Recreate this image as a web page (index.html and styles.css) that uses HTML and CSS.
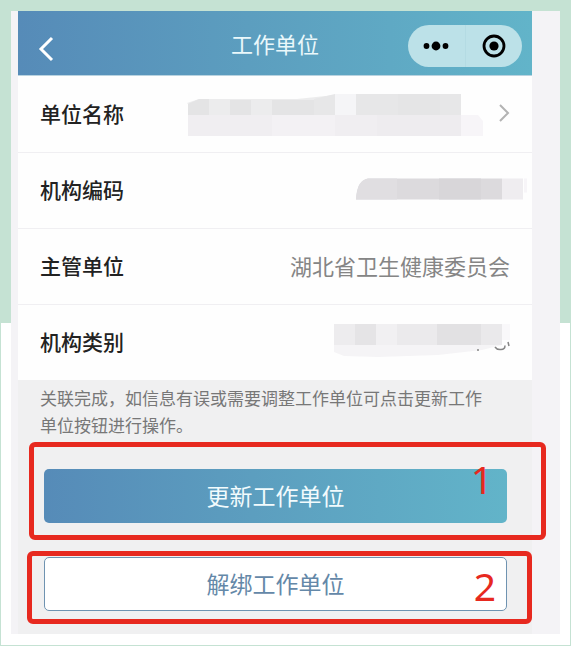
FILE: index.html
```
<!DOCTYPE html>
<html lang="zh-CN">
<head>
    <meta charset="UTF-8">
    <meta name="viewport" content="width=device-width, initial-scale=1.0">
    <title>工作单位</title>
    <link rel="stylesheet" href="styles.css">
</head>
<body>
    <div class="sheet">
        <main class="phone">
            <header class="navbar">
                <button class="back" aria-label="返回">
                    <svg width="16" height="26" viewBox="0 0 16 26"><path d="M14 2L3 13l11 11" fill="none" stroke="#fff" stroke-width="3"/></svg>
                </button>
                <h1>工作单位</h1>
                <div class="capsule">
                    <button aria-label="更多">
                        <svg width="26" height="10" viewBox="0 0 26 10"><circle cx="3.5" cy="5" r="2.9"/><circle cx="13" cy="5" r="4.4"/><circle cx="22.5" cy="5" r="2.9"/></svg>
                    </button>
                    <button aria-label="关闭">
                        <svg width="24" height="24" viewBox="0 0 24 24"><circle cx="12" cy="12" r="10" fill="none" stroke="#000" stroke-width="2.8"/><circle cx="12" cy="12" r="4.6"/></svg>
                    </button>
                </div>
            </header>

            <dl class="list">
                <div class="row">
                    <dt>单位名称</dt>
                    <dd>
                        <!-- 打码 -->
                        <svg width="297" height="46" viewBox="0 -4 297 46">
                            <path d="M0 9L12 5H110L148 1V21H1V10z" fill="#ececed"/>
                            <path d="M1 10L12 5H22V21H1zM43 6h21v15H43zM85 6h42v15H85z" fill="#e4e4e5"/>
                            <path d="M127 5l21-5v21h-21z" fill="#e7e7e8"/>
                            <path d="M148 0h21v21h-21z" fill="#f5f5f7"/>
                            <path d="M169 0h105v21H169z" fill="#e7e7e8"/>
                            <path d="M211 0h42v21h-42z" fill="#e5e5e6"/>
                            <path d="M1 21h273v21H1z" fill="#f0eef1"/>
                            <path d="M85 21h63v21H85z" fill="#f3f1f4"/>
                            <path d="M190 21h84v21h-84z" fill="#eeecef"/>
                            <path d="M274 21h17l5 6v15h-22z" fill="#f7f5f8"/>
                        </svg>
                        <svg class="arrow" width="12" height="20" viewBox="0 0 12 20"><path d="M2 2l8 8-8 8" fill="none" stroke="#b3b3b3" stroke-width="2"/></svg>
                    </dd>
                </div>
                <div class="row row-wide">
                    <dt>机构编码</dt>
                    <dd>
                        <svg width="171" height="22" viewBox="0 0 171 22">
                            <path d="M0 21.500Q1 2 12 .5H146v21z" fill="#dcdadd"/>
                            <path d="M0 21.500Q1 2 12 .5H41v21z" fill="#e0dee1"/>
                            <path d="M83 .5h42v21H83z" fill="#d8d6d9"/>
                            <path d="M146 .5h21v21h-21z" fill="#efedf0"/>
                            <path d="M168 .5h3v14h-3z" fill="#f7f5f8"/>
                        </svg>
                    </dd>
                </div>
                <div class="row">
                    <dt>主管单位</dt>
                    <dd>湖北省卫生健康委员会</dd>
                </div>
                <div class="row">
                    <dt>机构类别</dt>
                    <dd>
                        <svg width="176" height="34" viewBox="0 0 176 34">
                            <path d="M0 21h168l-20 5-44 5-60 2-34-1L0 28z" fill="#f5f4f6"/>
                            <path d="M0 0h168v21H0z" fill="#eae9eb"/>
                            <path d="M0 0h21v21H0z" fill="#edecee"/>
                            <path d="M21 0h21v21H21z" fill="#e5e4e6"/>
                            <path d="M42 0h21v21H42z" fill="#f1f0f2"/>
                            <path d="M63 0h40v21H63z" fill="#ebeaec"/>
                            <path d="M103 0h44v21h-44z" fill="#e2e1e3"/>
                            <path d="M168 0h8v16h-8z" fill="#f9f8fa"/>
                            <path d="M161 23q2 3 6 2.500q4 0 4-4M174 18l1 4M144 25v2" fill="none" stroke="#858585" stroke-width="1.500"/>
                        </svg>
                    </dd>
                </div>
            </dl>

            <p class="note">关联完成，如信息有误或需要调整工作单位可点击更新工作单位按钮进行操作。</p>

            <div class="mark mark-update">
                <button class="btn btn-primary">更新工作单位</button>
                <span class="num">1</span>
            </div>
            <div class="mark mark-unbind">
                <button class="btn btn-outline">解绑工作单位</button>
                <span class="num">2</span>
            </div>
        </main>
    </div>
</body>
</html>
```
FILE: styles.css
```
* {
    box-sizing: border-box;
}

body {
    margin: 0;
    min-height: 100vh;
    padding: 10px;
    border: 1px solid #c5e2d3;
    background: linear-gradient(#c5e2d3 50%, #fff 50%) no-repeat;
    font-family: "Liberation Sans", "Noto Sans CJK SC", sans-serif;
}

button {
    padding: 0;
    border: none;
    background: none;
    font-family: inherit;
    cursor: pointer;
}

svg {
    display: block;
}

.sheet {
    padding: 0 28px 0 7px;
    background-color: #f4f3f6;
}

.phone {
    padding-bottom: 10px;
    background-color: #f0f0f1;
}

/* 顶部导航 */
.navbar {
    display: grid;
    grid-template-columns: 1fr auto 1fr;
    align-items: center;
    height: 65px;
    padding: 6px 10px 0;
    border-bottom: 1px solid #b9d3e0;
    background: linear-gradient(to right, #568bb8, #5c9ebf 45%, #62b4c9);
}

.back {
    justify-self: start;
    padding: 6px 10px 0;
}

.navbar h1 {
    margin: 0;
    color: #eaf8fb;
    font-size: 22px;
    font-weight: normal;
    line-height: 32px;
}

.capsule {
    display: flex;
    justify-self: end;
    width: 114px;
    height: 42px;
    border-radius: 21px;
    background-color: #bce1e8;
}

.capsule button {
    display: flex;
    flex: 1;
    align-items: center;
    justify-content: center;
}

.capsule button + button {
    border-left: 1px solid #b4dbe3;
}

/* 信息列表 */
.list {
    margin: 0;
    background-color: #fefefe;
}

.row {
    display: flex;
    align-items: center;
    justify-content: space-between;
    height: 76px;
    padding: 0 22px 3px;
}

.row + .row {
    border-top: 1px solid #f0eff2;
}

.row-wide {
    padding-right: 5px;
}

dt {
    color: #222;
    font-size: 21px;
    font-weight: 500;
}

dd {
    display: flex;
    align-items: center;
    margin: 0;
    color: #858585;
    font-size: 22px;
}

.arrow {
    margin-left: 14px;
}

.note {
    margin: 0;
    padding: 6px 36px 2px 22px;
    color: #777;
    font-size: 17px;
    line-height: 27px;
}

/* 红框标注 */
.mark {
    position: relative;
    border: 5px solid #e7291f;
    border-radius: 6px;
}

.mark-update {
    margin: 0 -14px 11px 11px;
    padding: 22px 34px 12px 10px;
}

.mark-unbind {
    margin: 0 0 0 9px;
    padding: 1px 20px 8px 12px;
}

.num {
    position: absolute;
    color: #e7291f;
    font-family: "Noto Sans", sans-serif;
    font-size: 39px;
    line-height: 40px;
}

.mark-update .num {
    top: 12px;
    right: 48px;
}

.mark-unbind .num {
    top: 10px;
    right: 31px;
}

.btn {
    display: block;
    width: 100%;
    height: 54px;
    padding-bottom: 3px;
    border-radius: 5px;
    font-size: 23px;
}

.btn-primary {
    background: linear-gradient(to right, #568bb8, #5c9ebf 45%, #62b4c9);
    color: #f2fbfd;
}

.btn-outline {
    border: 1px solid #6f93b1;
    background-color: #fff;
    color: #6488a8;
}
```
